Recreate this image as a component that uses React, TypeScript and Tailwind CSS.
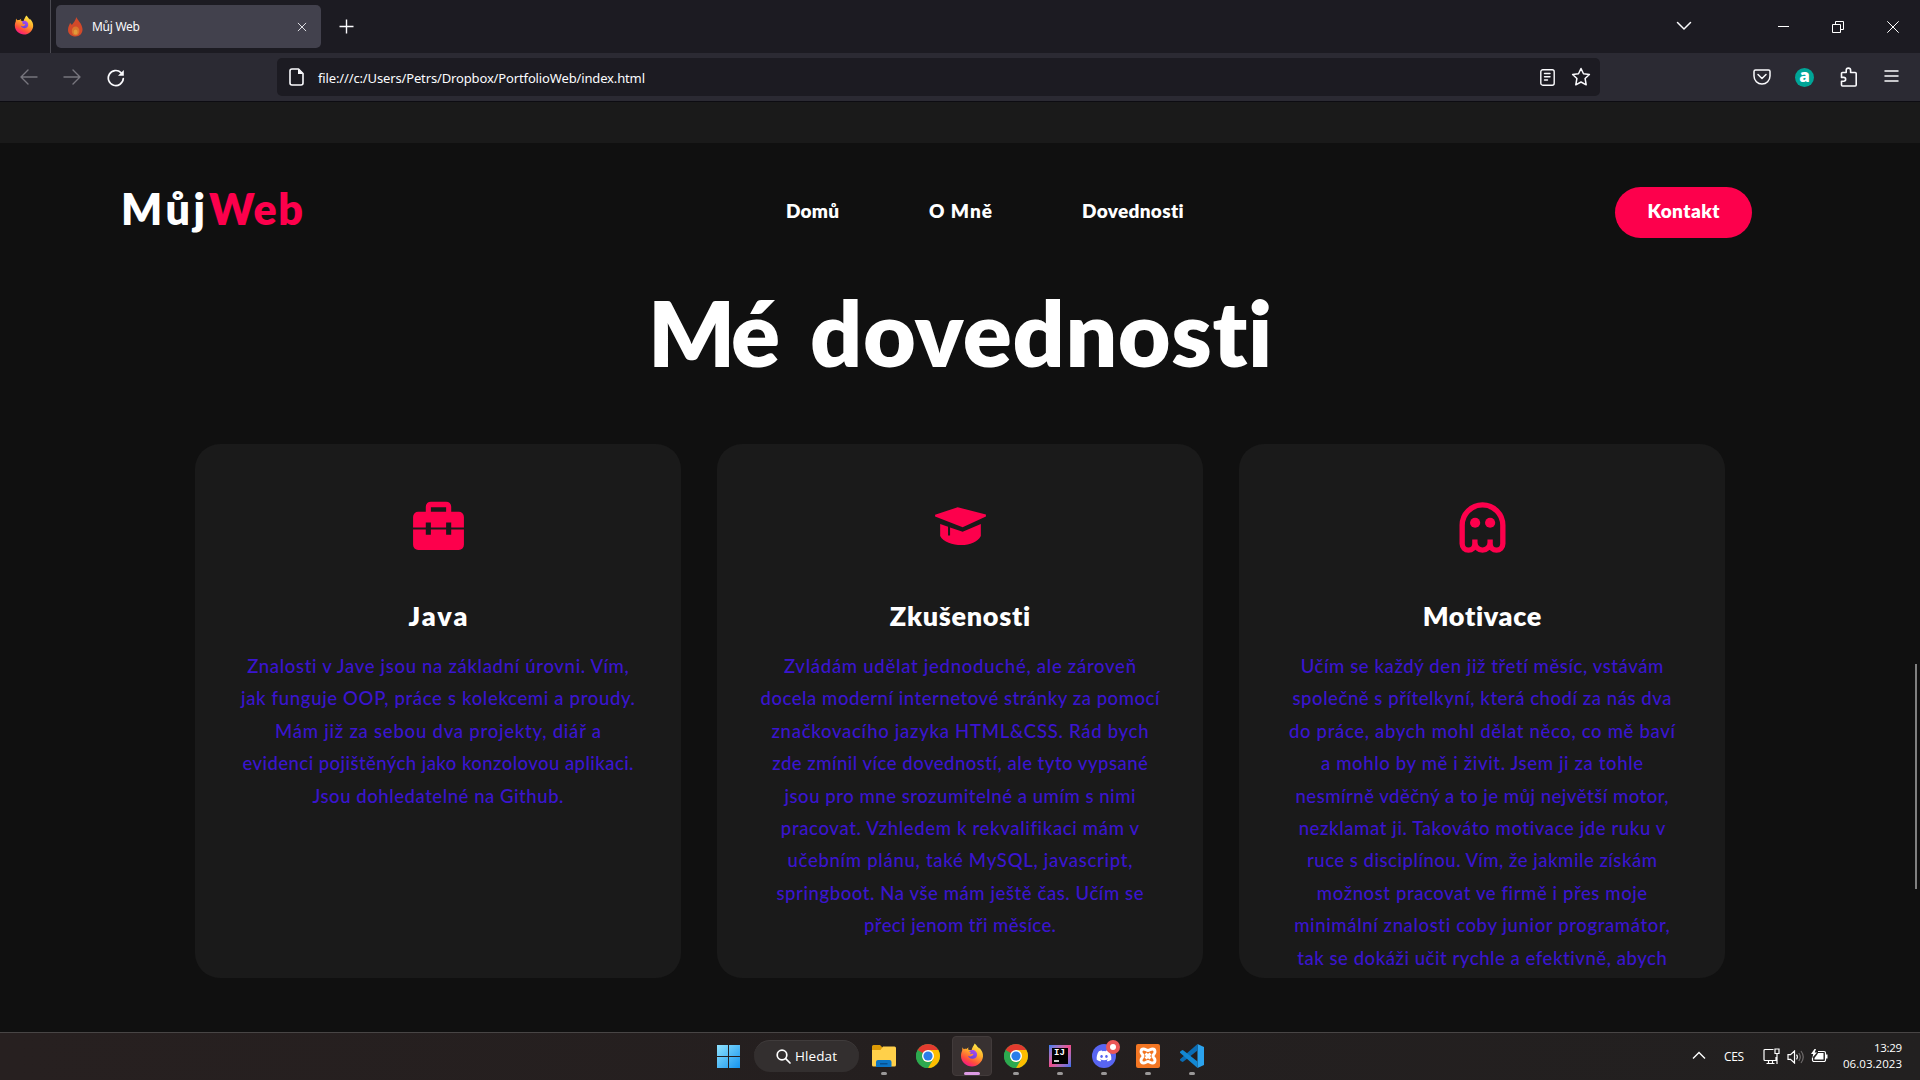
import React, { useLayoutEffect, useRef } from "react";
import { FaDiscord } from "react-icons/fa";

/* Text tracked so that it spans exactly `w` pixels. */
function Fit({ w, children, className = "" }: { w: number; children: string; className?: string }) {
  const ref = useRef<HTMLSpanElement>(null);
  useLayoutEffect(() => {
    const el = ref.current;
    if (!el) return;
    el.style.letterSpacing = "0px";
    el.style.marginRight = "0px";
    const gap = (w - el.getBoundingClientRect().width) / Math.max(1, children.length - 1);
    el.style.letterSpacing = `${gap}px`;
    el.style.marginRight = `${-gap}px`;
  }, [w, children]);
  return (
    <span ref={ref} className={`inline-block whitespace-nowrap ${className}`}>
      {children}
    </span>
  );
}

function Firefox({ size, id }: { size: number; id: string }) {
  return (
    <svg width={size} height={size} viewBox="0 0 24 24" className="shrink-0">
      <defs>
        <linearGradient id={`${id}a`} x1="0.8" y1="0" x2="0.3" y2="1">
          <stop offset="0" stopColor="#fff44f" />
          <stop offset="0.4" stopColor="#ffb02a" />
          <stop offset="0.75" stopColor="#ff4f3a" />
          <stop offset="1" stopColor="#f5128c" />
        </linearGradient>
        <linearGradient id={`${id}b`} x1="0.8" y1="0" x2="0.2" y2="1">
          <stop offset="0" stopColor="#b04bf0" />
          <stop offset="1" stopColor="#5a40e0" />
        </linearGradient>
      </defs>
      <path
        fill={`url(#${id}a)`}
        d="M2.6 4.2c.3 1 .8 1.5 1.4 2 .9-.4 1.700-.4 2.500-.2.600-1 1.500-1.500 2.500-1.600-.9.800-1 1.400-.9 2.200 1 .5 2 .3 3.400.8C12 4.500 13.600 2.800 14.700.500c1.500 1.200 2.200 2.600 3 3.600.8.400 1.200 1 1.500 1.600.2-.4.200-.6.200-1C22 7.500 23.300 10.500 23 13.500 22.500 19 17.500 23.500 12 23.500S1 19 1 13c0-2.500.5-4 1.200-5.500C2.200 6.200 2.200 5.200 2.600 4.200z"
      />
      <path
        fill={`url(#${id}b)`}
        d="M9 8.200c1.500-1.300 3.500-1.600 5.200-.9 2.100 1 3.300 3 2.800 5.200-.5 2.200-2.500 3.500-4.800 3.300-2.200-.2-3.800-1.400-4.100-3.100 1.400 1 2.800.9 3.900.1.700-.6 1.200-.6 1.400-1.100.1-.6-.6-.9-1.300-.9-.9 0-1.200.6-2.200.4.100-.8.700-1.200 1.300-1.700-.8-.2-1.600-.7-2.200-1.300z"
      />
    </svg>
  );
}

function Chrome() {
  return (
    <svg width="24" height="24" viewBox="0 0 24 24" className="shrink-0">
      <circle cx="12" cy="12" r="12" fill="#2da94f" />
      <path d="M12 12L1.610 6A12 12 0 0 1 22.390 6H12z" fill="#e33b2e" />
      <path d="M12 6h10.390A12 12 0 0 1 12 24L17.200 15z" fill="#fdbd00" />
      <path d="M12 24l5.200-9L12 12 6.800 15z" fill="#fdbd00" />
      <path d="M1.610 6A12 12 0 0 0 12 24l5.200-9a6 6 0 0 1-10.400 0z" fill="#2da94f" />
      <circle cx="12" cy="12" r="6" fill="#fff" />
      <circle cx="12" cy="12" r="4.600" fill="#2a7de9" />
    </svg>
  );
}

const skills = [
  {
    title: "Java",
    tw: 59,
    icon: (
      <path
        fill="currentColor"
        d="M9 3h6a2 2 0 0 1 2 2v2h3a2 2 0 0 1 2 2v4.200h-5v-2h-2v2H9v-2H7v2H2V9a2 2 0 0 1 2-2h3V5a2 2 0 0 1 2-2zm0 2.200V7h6V5.200zM2 14h5v2h2v-2h6v2h2v-2h5v6a2 2 0 0 1-2 2H4a2 2 0 0 1-2-2z"
      />
    ),
    lines: [
      ["Znalosti v Jave jsou na základní úrovni. Vím,", 382],
      ["jak funguje OOP, práce s kolekcemi a proudy.", 394],
      ["Mám již za sebou dva projekty, diář a", 326],
      ["evidenci pojištěných jako konzolovou aplikaci.", 391],
      ["Jsou dohledatelné na Github.", 251],
    ],
  },
  {
    title: "Zkušenosti",
    tw: 141,
    icon: (
      <path
        fill="currentColor"
        d="M2 8.200L10.900 5.200 22 8.100v.8l-9.150 4.200L2 8.900zM4 11.800l3.100 1.100v3.400h.8v-3.100l4.950 1.650L20 11.800v4.700c-1.300 2.400-4.300 3.600-7.600 3.600-3.600 0-7.100-1.200-8.400-3.600z"
      />
    ),
    lines: [
      ["Zvládám udělat jednoduché, ale zároveň", 352],
      ["docela moderní internetové stránky za pomocí", 399],
      ["značkovacího jazyka HTML&CSS. Rád bych", 377],
      ["zde zmínil více dovedností, ale tyto vypsané", 376],
      ["jsou pro mne srozumitelné a umím s nimi", 351],
      ["pracovat. Vzhledem k rekvalifikaci mám v", 358],
      ["učebním plánu, také MySQL, javascript,", 345],
      ["springboot. Na vše mám ještě čas. Učím se", 367],
      ["přeci jenom tři měsíce.", 192],
    ],
  },
  {
    title: "Motivace",
    tw: 119,
    icon: (
      <g>
        <path
          fill="none"
          stroke="currentColor"
          strokeWidth="2.100"
          d="M9 17.900v1.700a2.500 2.500 0 0 1-5 0V12.300a8 8 0 0 1 16 0v7.300a2.500 2.500 0 0 1-5 0v-1.700M15 19.100a3 3 0 0 1-6 0"
        />
        <circle cx="9.100" cy="11.300" r="2" fill="currentColor" />
        <circle cx="15" cy="11.300" r="2" fill="currentColor" />
      </g>
    ),
    lines: [
      ["Učím se každý den již třetí měsíc, vstávám", 363],
      ["společně s přítelkyní, která chodí za nás dva", 379],
      ["do práce, abych mohl dělat něco, co mě baví", 386],
      ["a mohlo by mě i živit. Jsem ji za tohle", 322],
      ["nesmírně vděčný a to je můj největší motor,", 373],
      ["nezklamat ji. Takováto motivace jde ruku v", 367],
      ["ruce s disciplínou. Vím, že jakmile získám", 350],
      ["možnost pracovat ve firmě i přes moje", 330],
      ["minimální znalosti coby junior programátor,", 376],
      ["tak se dokáži učit rychle a efektivně, abych", 370],
    ],
  },
] as const;

function TabBar() {
  return (
    <div className="flex h-[53px] items-center bg-[#1c1b22] text-[#fbfbfe]">
      <div className="flex h-full w-[51px] items-center border-r border-[#4b4a52] pb-[3px] pl-[14px]">
        <Firefox size={20} id="fx1" />
      </div>
      <div className="ml-[5px] flex h-[43px] w-[265px] items-center rounded-[5px] bg-[#42414d] pl-[11px]">
        <svg width="17" height="20" viewBox="0 0 17 20">
          <path d="M9.500 0c.5 3 5.500 6 6 12 .3 4.500-3 7.500-7 7.500S1 17 1 13c0-3.500 1.500-5 2-7 1 .5 1.500 1.200 1.800 2C6.500 6 8.500 3 9.500 0z" fill="#d2492a" />
          <ellipse cx="8.600" cy="14" rx="3.800" ry="4.500" fill="#d9762f" />
          <ellipse cx="8.600" cy="15" rx="2" ry="2.600" fill="#e09a3a" />
        </svg>
        <Fit w={48} className="ml-[8px] text-[12px]">Můj Web</Fit>
        <svg width="10" height="10" viewBox="0 0 11 11" className="mr-[14px] ml-auto" fill="none" stroke="#dddde2" strokeWidth="1.100">
          <path d="M1 1l9 9M10 1l-9 9" />
        </svg>
      </div>
      <svg width="15" height="15" viewBox="0 0 15 15" className="ml-[18px]" stroke="#fbfbfe" strokeWidth="1.400">
        <path d="M7.500.5v14M.5 7.500h14" />
      </svg>
      <svg width="16" height="10" viewBox="0 0 16 10" className="mr-[86px] mb-[2px] ml-auto" fill="none" stroke="#fbfbfe" strokeWidth="1.500" strokeLinecap="round">
        <path d="M1.500 1.500L8 8l6.500-6.500" />
      </svg>
      <svg width="11" height="12" viewBox="0 0 11 12" className="mr-[43px]" shapeRendering="crispEdges">
        <path d="M0 5h11v1H0z" fill="#fff" />
      </svg>
      <svg width="12" height="12" viewBox="0 0 12 12" className="mr-[43px]" fill="none" stroke="#fff">
        <path d="M.5 3.500h8v8h-8zM3.500 3V.5h8v8H9" />
      </svg>
      <svg width="12" height="12" viewBox="0 0 12 12" className="mr-[21px]" fill="none" stroke="#fff">
        <path d="M.3.300l11.400 11.400M11.700.300L.3 11.700" />
      </svg>
    </div>
  );
}

function ToolBar() {
  return (
    <div className="flex h-[49px] items-center border-b border-[#0d0c12] bg-[#2b2a33] text-[#fbfbfe]">
      <svg width="18" height="16" viewBox="0 0 18 16" className="ml-[20px]" fill="none" stroke="#77767e" strokeWidth="1.400" strokeLinecap="round" strokeLinejoin="round">
        <path d="M17 8H1M8 1L1 8l7 7" />
      </svg>
      <svg width="18" height="16" viewBox="0 0 18 16" className="ml-[25px]" fill="none" stroke="#77767e" strokeWidth="1.400" strokeLinecap="round" strokeLinejoin="round">
        <path d="M1 8h16M10 1l7 7-7 7" />
      </svg>
      <svg width="18" height="18" viewBox="0 0 18 18" className="mt-[2px] ml-[26px]" fill="none" stroke="#fbfbfe" strokeWidth="1.700" strokeLinecap="round">
        <path d="M16.300 9.500A7.500 7.500 0 1 1 14 3.600" />
        <path d="M16.800 1v5.800H11z" fill="#fbfbfe" stroke="none" />
      </svg>
      <div className="ml-[152px] flex h-[38px] w-[1323px] items-center rounded-[5px] bg-[#1c1b22] pl-[12px]">
        <svg width="15" height="18" viewBox="0 0 15 18" fill="none" stroke="#fbfbfe" strokeWidth="1.600" strokeLinejoin="round">
          <path d="M3 1h6.500L14 5.500V15a2 2 0 0 1-2 2H3a2 2 0 0 1-2-2V3a2 2 0 0 1 2-2z" />
          <path d="M9 1v5h5z" fill="#fbfbfe" stroke="none" />
        </svg>
        <Fit w={327} className="ml-[14px] pt-[3px] text-[13px]">file:///c:/Users/Petrs/Dropbox/PortfolioWeb/index.html</Fit>
        <svg width="15" height="17" viewBox="0 0 15 17" className="ml-auto" fill="none" stroke="#fbfbfe" strokeWidth="1.400" strokeLinecap="round">
          <rect x=".8" y=".8" width="13.400" height="15.400" rx="2" />
          <path d="M4.500 4.500h5.500M4.500 7.700h5.500M4.500 11h3" />
        </svg>
        <svg width="20" height="20" viewBox="0 0 20 20" className="mr-[9px] ml-[16px]" fill="none" stroke="#fbfbfe" strokeWidth="1.500" strokeLinejoin="round">
          <path d="M10 1.500l2.500 5.300 5.900.7-4.300 4 1.100 6.300L10 15l-5.200 2.800 1.100-6.300-4.300-4 5.900-.7z" />
        </svg>
      </div>
      <svg width="18" height="16" viewBox="0 0 18 16" className="ml-[153px]" fill="none" stroke="#fbfbfe" strokeWidth="1.500" strokeLinecap="round" strokeLinejoin="round">
        <path d="M2.500 1h13A1.500 1.500 0 0 1 17 2.500V7A8 8 0 0 1 1 7V2.500A1.500 1.500 0 0 1 2.500 1z" />
        <path d="M5 5.500l4 4 4-4" />
      </svg>
      <div className="ml-[24px] flex size-[19px] items-center justify-center rounded-full bg-[#00a597] pb-[3px] font-['Open_Sans',sans-serif] text-[17px] leading-none font-extrabold text-white">
        a
      </div>
      <svg width="18" height="20" viewBox="0 0 18 20" className="ml-[26px]" fill="none" stroke="#fbfbfe" strokeWidth="1.600" strokeLinejoin="round">
        <path d="M2.500 5.500h3.700V3.300a2.200 2.200 0 0 1 4.400 0v2.200h4.600a1 1 0 0 1 1 1V18a1 1 0 0 1-1 1H2.500a1 1 0 0 1-1-1v-3.700h2.200a1.900 1.900 0 0 0 0-3.900H1.500V6.500a1 1 0 0 1 1-1z" />
      </svg>
      <svg width="15" height="14" viewBox="0 0 15 14" className="mb-[2px] ml-[26px]" stroke="#fbfbfe" strokeWidth="1.500" strokeLinecap="round">
        <path d="M1 2h13M1 7h13M1 12h13" />
      </svg>
    </div>
  );
}

function Running({ children }: { children: React.ReactNode }) {
  return (
    <div className="flex h-10 w-10 flex-col items-center pt-[7px]">
      <div className="flex h-6 w-6 items-center justify-center">{children}</div>
      <div className="mt-[4px] h-[3px] w-[6px] rounded-full bg-[#9a9898]" />
    </div>
  );
}

function TaskBar() {
  return (
    <div className="flex h-12 items-center border-t border-[#484545] bg-linear-to-r from-[#272020] via-[#241f1f] to-[#222020] font-['Open_Sans',sans-serif] text-white">
      <svg width="23" height="23" viewBox="0 0 23 23" className="ml-[717px]">
        <defs>
          <linearGradient id="win" x1="0" y1="0" x2="1" y2="1">
            <stop offset="0" stopColor="#8fe3ff" />
            <stop offset="1" stopColor="#1593ee" />
          </linearGradient>
        </defs>
        <path d="M0 0h11v11H0zM12 0h11v11H12zM0 12h11v11H0zM12 12h11v11H12z" fill="url(#win)" />
      </svg>
      <div className="mb-px ml-[14px] flex h-8 w-[105px] items-center rounded-full border-t border-[#403c3c] bg-[#332f2f] pl-[22px]">
        <svg width="15" height="15" viewBox="0 0 15 15" fill="none" stroke="#fff" strokeWidth="1.700" strokeLinecap="round">
          <circle cx="6" cy="6" r="4.800" />
          <path d="M9.700 9.700l4.300 4.300" />
        </svg>
        <Fit w={42} className="ml-[4px] text-[13.500px] font-medium">Hledat</Fit>
      </div>
      <div className="ml-[5px] flex items-center gap-1">
        <Running>
          <svg width="24" height="22" viewBox="0 0 24 22">
            <path d="M0 1.500A1.500 1.500 0 0 1 1.500 0H8l3 3v4H0z" fill="#dd9a06" />
            <path d="M0 5h8.500l2.500-3.500h11.500A1.500 1.500 0 0 1 24 3v17a1.500 1.500 0 0 1-1.500 1.500h-21A1.500 1.500 0 0 1 0 20z" fill="#ffd04a" />
            <path d="M4 22v-5a2 2 0 0 1 2-2h11.500a2 2 0 0 1 2 2v5z" fill="#0b74c4" />
            <path d="M8 18h7.500v1.500H8z" fill="#08508f" />
          </svg>
        </Running>
        <div className="flex h-10 w-10 justify-center pt-[7px]">
          <Chrome />
        </div>
        <div className="mb-px flex h-10 w-10 flex-col items-center rounded-[4px] border border-[#423b3b] bg-[#383131] pt-[6px]">
          <Firefox size={24} id="fx2" />
          <div className="mt-[5px] h-[3px] w-4 shrink-0 rounded-full bg-[#dd9be4]" />
        </div>
        <Running>
          <Chrome />
        </Running>
        <Running>
          <div className="flex size-[22px] items-center justify-center bg-linear-to-br from-[#2a7df6] via-[#f04a8a] to-[#2b6df0]">
            <div className="flex size-[16px] flex-col bg-black pt-px pl-[2px]">
              <span className="h-[9px] font-['Liberation_Mono',monospace] text-[9px] leading-[9px] font-bold">IJ</span>
              <span className="mt-[2px] h-[2px] w-[5px] bg-[#ccc]" />
            </div>
          </div>
        </Running>
        <div className="relative">
          <Running>
            <div className="flex size-6 items-center justify-center rounded-full bg-[#5865f2]">
              <FaDiscord size={16} />
            </div>
          </Running>
          <div className="absolute top-[3px] left-[22px] flex size-[14px] items-center justify-center rounded-full bg-[#ec5757]">
            <div className="size-[6px] rounded-full bg-white" />
          </div>
        </div>
        <Running>
          <svg width="24" height="24" viewBox="0 0 24 24">
            <rect width="24" height="24" rx="2" fill="#f37623" />
            <path
              d="M7.500 5c2 0 3 1.500 4.500 1.500S14.500 5 16.500 5C18.500 5 19 6.500 19 8s-2 2.500-2 4 2 2.500 2 4-.5 3-2.500 3-3-1.500-4.500-1.500S9.500 19 7.500 19 5 17.500 5 16s2-2.500 2-4-2-2.500-2-4 .5-3 2.500-3zM9.500 9.500l5 5M14.500 9.500l-5 5"
              fill="none"
              stroke="#fff"
              strokeWidth="2.900"
            />
          </svg>
        </Running>
        <Running>
          <svg width="24" height="24" viewBox="0 0 24 24">
            <path d="M17.500 0L24 3v18l-6.500 3z" fill="#2ba3ee" />
            <path d="M17.500 0v6.500L3.500 17.500 2.300 18 0 16.300v-1z" fill="#0a6db5" />
            <path d="M17.500 24v-6.500L3.500 6.500 2.300 6 0 7.700v1z" fill="#1388d3" />
          </svg>
        </Running>
      </div>
      <svg width="14" height="9" viewBox="0 0 14 9" className="mb-[2px] ml-auto" fill="none" stroke="#fff" strokeWidth="1.400">
        <path d="M1 7.500l6-6 6 6" />
      </svg>
      <Fit w={20} className="ml-[18px] text-[12px]">CES</Fit>
      <svg width="17" height="17" viewBox="0 0 17 17" className="ml-[19px]" fill="none" stroke="#fff" strokeWidth="1.200">
        <path d="M10.500 1.500H2a1 1 0 0 0-1 1v9a1 1 0 0 0 1 1h11V9M3.500 15.500h8M5.500 12.500v3M9.500 12.500v3M12 1h4v4.500h-4zM14 5.500V16" />
      </svg>
      <svg width="17" height="14" viewBox="0 0 17 14" className="ml-[7px]" fill="none" strokeWidth="1.200">
        <path d="M1 4.700h2.500L7.500 1v12L3.500 9.300H1zM9.500 4.700q1.700 2.300 0 4.600" stroke="#fff" />
        <path d="M11.800 3q3 4 0 8M14 1q4.500 6 0 12" stroke="#6f6b6b" />
      </svg>
      <svg width="17" height="14" viewBox="0 0 17 14" className="mb-[2px] ml-[7px]">
        <path d="M7 4h5.500v6.500h-9V9L6.500 5z" fill="#fff" />
        <path d="M7 2.500h6a1.500 1.500 0 0 1 1.500 1.500v7a1.500 1.500 0 0 1-1.500 1.500H3A1.500 1.500 0 0 1 1.500 11V8.500" fill="none" stroke="#fff" strokeWidth="1.200" />
        <path d="M15 5.500h1.500v4H15zM3.500 0L0 5h2.200L1.500 8.500 6 3.500H3.700L5 0z" fill="#fff" />
      </svg>
      <div className="mr-[18px] mb-[2px] ml-[15px] flex w-[59px] flex-col items-end text-[11.500px] leading-4">
        <Fit w={28}>13:29</Fit>
        <Fit w={59}>06.03.2023</Fit>
      </div>
    </div>
  );
}

export default function App() {
  return (
    <div className="flex h-[1080px] w-[1920px] flex-col overflow-hidden bg-[#101010] font-['Noto_Sans',sans-serif]">
      <TabBar />
      <ToolBar />
      <div className="relative flex grow flex-col font-[Lato,sans-serif]">
        <div className="h-[41px] bg-[#1a1a1a]" />
        <header className="flex h-[139px] items-center text-[20px] leading-6 font-extrabold text-white">
          <div className="ml-[121px] flex w-[182px] justify-between pb-[8px] text-[43px] leading-[50px]">
            <Fit w={84}>Můj</Fit>
            <Fit w={94} className="text-[#fd004c]">Web</Fit>
          </div>
          <nav className="ml-[483px] flex gap-[90px] pb-[4px] text-[19px]">
            <Fit w={53}>Domů</Fit>
            <Fit w={63}>O Mně</Fit>
            <Fit w={102}>Dovednosti</Fit>
          </nav>
          <div className="mr-[168px] ml-auto flex h-[51px] w-[137px] justify-center rounded-full bg-[#fd004c] pt-[12px] text-[19px]">
            <Fit w={72}>Kontakt</Fit>
          </div>
        </header>
        <h1 className="ml-[648px] flex h-[100px] gap-[30px] text-[91px] leading-[100px] font-extrabold text-white">
          <Fit w={132}>Mé</Fit>
          <Fit w={464}>dovednosti</Fit>
        </h1>
        <main className="mt-[62px] ml-[195px] flex gap-[36px]">
          {skills.map((s) => (
            <section key={s.title} className="flex h-[534px] w-[486px] flex-col items-center overflow-hidden rounded-[25px] bg-[#1a1a1a] pt-[50px]">
              <svg width="61" height="61" viewBox="0 0 24 24" className="shrink-0 text-[#fd004c]">
                {s.icon}
              </svg>
              <h2 className="mt-[44px] text-[27px] leading-[34px] font-extrabold text-white">
                <Fit w={s.tw}>{s.title}</Fit>
              </h2>
              <div className="mt-[17px] flex flex-col items-center text-[18.500px] leading-[32.400px] font-medium text-[#3a15d0]">
                {s.lines.map(([text, w]) => (
                  <Fit key={text} w={w}>{text}</Fit>
                ))}
              </div>
            </section>
          ))}
        </main>
        <div className="absolute top-[562px] right-[3px] h-[225px] w-[2px] bg-[#808080]" />
      </div>
      <TaskBar />
    </div>
  );
}
